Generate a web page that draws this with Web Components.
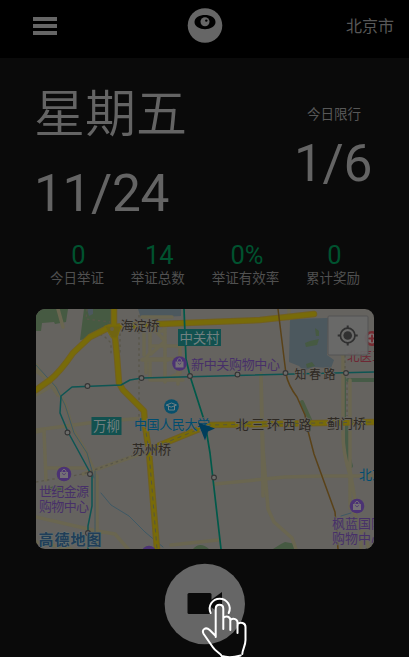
<!DOCTYPE html>
<html lang="zh-CN"><head><meta charset="utf-8"><title>举证</title>
<style>html,body{margin:0;background:#0a0a0a}body{font-family:Roboto,"Noto Sans CJK SC",sans-serif;color:#646464}</style></head>
<body><evidence-app></evidence-app>
<script>
const define=(name,html)=>{
  const t=document.createElement('template');t.innerHTML=html;
  customElements.define(name,class extends HTMLElement{
    constructor(){super();this.attachShadow({mode:'open'}).append(t.content.cloneNode(true));}
  });
};
define('app-header',`<style>
:host{display:grid;grid-template-columns:1fr auto 1fr;align-items:center;height:58px;padding:0 15px 6px 33px;box-sizing:border-box;background:#000;font-size:16px}
.menu{display:block}.logo{display:block;margin-left:-17px}.city{justify-self:end;line-height:20px;padding-top:1px;color:#585858}
</style>
<svg class="menu" width="24" height="18"><path d="M0 2h24M0 9h24M0 16h24" stroke="#666" stroke-width="4"/></svg>
<svg class="logo" width="36" height="36"><circle cx="18" cy="17.500" r="17.300" fill="#666"/><path d="M7.500 14C7.500 4.500 28.500 4.500 28.500 14S7.500 23.500 7.500 14Z" fill="#000"/><circle cx="18" cy="13.800" r="4.500" fill="#666"/><circle cx="19.300" cy="12.600" r="1.200" fill="#000"/></svg>
<span class="city"><slot></slot></span>`);
define('day-summary',`<style>
:host{display:flex;justify-content:space-between;padding:24px 37px 0 34px;height:180px;box-sizing:border-box;white-space:nowrap}
.day{font:350 51px/58px "Noto Sans CJK SC",sans-serif;margin-top:-1px}.date{font-size:51.500px;line-height:60px;margin-top:25px;letter-spacing:-.4px}
.limit{text-align:center;padding-top:22px}.cap{font-size:13.500px;line-height:20px;color:#585858;padding-left:2px}.num{font-size:51.500px;line-height:60px;margin-top:10px;letter-spacing:-.4px}
</style><div><div class="day"><slot name="day"></slot></div><div class="date"><slot name="date"></slot></div></div>
<div class="limit"><div class="cap"><slot name="caption"></slot></div><div class="num"><slot name="limit"></slot></div></div>`);
define('stat-item',`<style>:host{display:block;text-align:center;white-space:nowrap}.n{font-size:25.500px;line-height:30px;color:#00522f;padding-left:3px;margin-top:-.5px}.l{font-size:13.500px;line-height:18px;color:#505050;margin-top:-1px}</style>
<div class="n"><slot name="value"></slot></div><div class="l"><slot></slot></div>`);
define('stat-row',`<style>:host{display:flex;justify-content:space-between;padding:2px 49px 0 50px;height:71px;box-sizing:border-box}</style><slot></slot>`);
define('area-map',`<style>
:host{display:block;width:338px;height:240px;margin-left:36px;border-radius:9px;overflow:hidden;background:#65635f}
svg{display:block}path,line{fill:none;stroke-linecap:round;stroke-linejoin:round}
.minor{stroke:#6a6650;stroke-width:3.500}.edge{stroke:#72601f;stroke-width:6.500}.road{stroke:#786b09;stroke-width:4.500}
.dash{stroke:#56543e;stroke-width:1;stroke-dasharray:4 4;stroke-linecap:butt}.rail{stroke:#595649;stroke-width:1.300;stroke-dasharray:2.500 3;stroke-linecap:butt}
.metro{stroke:#0d5553;stroke-width:1.500}.green{stroke:#00594a;stroke-width:1.700}.brown{stroke:#5a4218;stroke-width:1.500}
.park{fill:#465a42;stroke:none}.water{fill:#4c585e;stroke:none}
.stops circle{fill:#6b6b69;stroke:#353535;stroke-width:1.100}
text{font-family:"Noto Sans CJK SC",sans-serif;paint-order:stroke;stroke:#65635f;stroke-width:1.500px;stroke-linejoin:round}
.place{fill:#2e2923;font-size:13px}.shop{fill:#473069;font-size:13px}.blue{fill:#004d70;font-size:13px}.tag{fill:#718080;stroke:none;font-size:13.500px}
</style>
<svg width="338" height="240" viewBox="36 309 338 240">
<path class="park" d="M36 309H68L66 322 55 324 54 322 42 323 41 331H36ZM84 309H112V328L99 331 86 339 80 340Z"/>
<path class="water" d="M87 309h6v5l-4 2ZM138 309h43v7l-40 2ZM290 319l38-1-1 37 7 5-3 8-18-1-9 4-5-5-10-4Z"/>
<path class="park" d="M305 343l5-2 9-2-2 6-11 2ZM315 328l4 3v5h-3ZM306 364l6-2 3 4-8 2Z"/>
<path d="M347 426V452L351 466M344 378V420M348 380H374" stroke="#465b47" stroke-width="4"/><path d="M302 402l9 20" stroke="#4b5c43" stroke-width="4"/>
<path class="park" d="M273 549l8-5 4-2 11 2-2 5ZM193 549q7-8 16 0ZM47 489q7-5 17-3v6H48Z"/>
<g class="minor"><path d="M58 309l5 18M36 365l9 13 10 8 10 18 8 26 12 20 10 23 2 76M36 371l10 7 12 17M36 430l60-8 48-4M150 331h12l6-7M150 331v22l-4 5v15M165 327v55M150 346h32M143 359h35v25M153 328l12 13-14 13M142 360h26M150 360v20h33M180 329v44l-14 6M142 317h30"/>
<path d="M36 432l8-2 2 50M46 468h38M83 474l66-23M36 395l14-8M36 517l61 14 18 3 13 15M97 476v73M171 545l47-5M215 484l70-7 37-1H374M261 374l2 75 5 60 6 13 18 16 4 11M289 309v10M343 355v78q0 20 7 42v33M350 380v90l5 30M354 511l7 20v18M342 318v37M262 426l1 70M36 542l35 7M261 378l1 60M360 520l9 29M144 332v23"/></g>
<path d="M36 365l20 22 9 18 9 28 13 20 7 25M101 493l10 12 18 11 16 16 18 15M95 471v62M341 516l10-3" stroke="#3f5965" stroke-width="1"/>
<path class="rail" d="M139 315v107M36 482l47-8 36-13 26-10M87 309l-1 10 24 3M90 339q8-7 14-3l7 7v11M120 328v26M347 382v34M345 333v42"/>
<g class="edge"><path d="M36 390l14-10q10-8 23-27l17-16 20-10 50-3 100-4 54-6"/><path d="M114 309v18l3 30 2 26 4 7 11 11 10 10 1 14 4 27 8 97M149 452l11-7 37-15 13-5 163-3"/></g>
<g class="road"><path d="M36 390l14-10q10-8 23-27l17-16 20-10 50-3 100-4 54-6"/><path d="M114 309v18l3 30 2 26 4 7 11 11 10 10 1 14 4 27 8 97M149 452l11-7 37-15 13-5 163-3"/></g>
<path d="M105 326h16l-4 12h-5Z" style="fill:#706411;stroke:#786b09"/><circle cx="112" cy="329" r="2" fill="#686040"/>
<path class="dash" d="M145 425l4 27 8 97M149 452l11-7 37-15 13-5 163-3"/>
<path class="metro" d="M88 549v-23l4-20v-30l-24-44-8-19 1-17 11-9 49-2 9-5 12-2 232-6"/>
<path class="green" d="M184 309l2 50 4 17 15 47 5 30 11 96"/><path class="brown" d="M278 309l8 65q2 11 11 23l8 18 3 16 6 23 21 58 3 37"/>
<g class="stops"><circle cx="87.500" cy="386" r="2.400"/><circle cx="141.500" cy="378" r="2.400"/><circle cx="190" cy="376" r="2.400"/><circle cx="237.500" cy="374.500" r="2.400"/><circle cx="285.500" cy="373" r="2.400"/><circle cx="346" cy="373" r="2.400"/><circle cx="67.500" cy="432.500" r="2.400"/><circle cx="90" cy="474" r="2.400"/><circle cx="88" cy="533" r="2.400"/><circle cx="214" cy="477.500" r="2.400"/><circle cx="308" cy="429" r="2.400"/></g>
<path d="M178 329h43v17h-43ZM91.500 417h30v18h-30Z" style="fill:#12514f"/>
<text class="tag" x="179.500" y="342.500" textLength="40">中关村</text><text class="tag" x="93" y="431" textLength="27">万柳</text>
<text class="place" x="120.500" y="329.500">海淀桥</text><text class="place" x="132" y="454">苏州桥</text><text class="place" x="294.500" y="378.500" textLength="41" style="font-size:12px">知春路</text>
<text class="blue" x="134" y="429" textLength="76">中国人民大学</text>
<path d="M198 422.500l17 6-7 3-3 9Z" style="fill:#003d5c"/>
<text class="place" x="235.500" y="428.500" textLength="76">北三环西路</text><text class="place" x="327" y="427.500">蓟门桥</text>
<text class="shop" x="191" y="368.500" textLength="89">新中关购物中心</text>
<text class="shop" x="39" y="496" textLength="50">世纪金源</text><text class="shop" x="39" y="511" textLength="50">购物中心</text>
<text class="shop" x="332" y="528">枫蓝国际</text><text class="shop" x="332" y="542.500">购物中心</text>
<text x="347" y="360.500" font-size="12.500" fill="#6d2834">北医三院</text><text class="blue" x="359" y="479">北京</text>
<g fill="#4b3274"><circle cx="179.500" cy="363.500" r="7.300"/><circle cx="64" cy="474" r="7.300"/><circle cx="357" cy="506" r="7.300"/><circle cx="149" cy="553" r="7.300"/></g>
<g><path d="M175.500 361.500h8v6h-8ZM60 472h8v6h-8ZM353 504h8v6h-8Z" style="fill:#747076"/><path d="M177.500 361v-1q2-3.500 4 0v1M62 472v-1q2-3.500 4 0v1M355 504v-1q2-3.500 4 0v1" stroke="#747076"/><path d="M178 363q1.500 3 3 0M62.500 473.500q1.500 3 3 0M355.500 505.500q1.500 3 3 0" stroke="#4b3274" stroke-width=".8"/></g>
<circle cx="171.500" cy="406.500" r="7.300" fill="#07506c"/><path d="M166.500 405l5-2 5 2-5 2ZM168.500 406v4h6v-4" stroke="#718084"/>
<circle cx="372" cy="338.500" r="7.500" fill="#762c32"/><circle cx="372" cy="338.500" r="5" fill="#7c7272"/><path d="M369 338.500h6M372 335.500v6" stroke="#762c32" stroke-width="2"/>
<text x="38.500" y="544.500" style="font-size:15px;font-weight:700;fill:#203e58;stroke:#65706f;stroke-width:1px" textLength="63">高德地图</text>
<rect x="328" y="316" width="40" height="39" rx="1" fill="#696969" fill-opacity=".9" stroke="#555"/>
<circle cx="347.700" cy="335.500" r="7.300" fill="none" stroke="#303030" stroke-width="1.700"/><circle cx="347.700" cy="335.500" r="4.300" fill="#303030"/><path d="M347.700 325.500v3M347.700 342.500v3M337.700 335.500h3M354.700 335.500h3" stroke="#303030" stroke-width="2" style="stroke-linecap:butt"/>
</svg>`);
define('record-button',`<style>:host{display:block;width:96px;height:96px;margin:12px 0 0 163px}svg{display:block}</style>
<svg width="96" height="96" viewBox="163 561 96 96"><circle cx="204.800" cy="604" r="40.200" fill="#666"/>
<rect x="187.500" y="593" width="24" height="21" rx="1.500" fill="#0a0a0a"/><path d="M211 600l11-8v23l-11-8Z" fill="#0a0a0a"/>
<path d="M215.800 628V608.500a3.300 3.300 0 0 1 7 0V628Z" fill="#666"/>
<g fill="none" stroke="#fff" stroke-width="2" stroke-linecap="round" stroke-linejoin="round"><path d="M210.700 613a10 10 0 1 1 18 0"/><path d="M215.700 637V608.800c0-5.400 7.600-5.400 7.600 0V629M223.300 618c3-3 7-1 7 2v10M230.500 620c3-2.500 7-.5 7 2.500V633M237.500 624c3-2.500 8-1 8 3v13c0 6-3 9-3.200 14M215.700 636l-6-6c-4-3.500-8.500-.5-6 4l9 13c3 5 8 6 9 9q8 2.500 19-.5"/></g></svg>`);
define('evidence-app',`<style>:host{display:block;width:409px;height:657px;overflow:hidden;background:#0a0a0a}</style>
<app-header>北京市</app-header>
<day-summary><span slot="day">星期五</span><span slot="date">11/24</span><span slot="caption">今日限行</span><span slot="limit">1/6</span></day-summary>
<stat-row><stat-item><span slot="value">0</span>今日举证</stat-item><stat-item><span slot="value">14</span>举证总数</stat-item><stat-item><span slot="value">0%</span>举证有效率</stat-item><stat-item><span slot="value">0</span>累计奖励</stat-item></stat-row>
<area-map></area-map><record-button></record-button>`);
</script></body></html>
